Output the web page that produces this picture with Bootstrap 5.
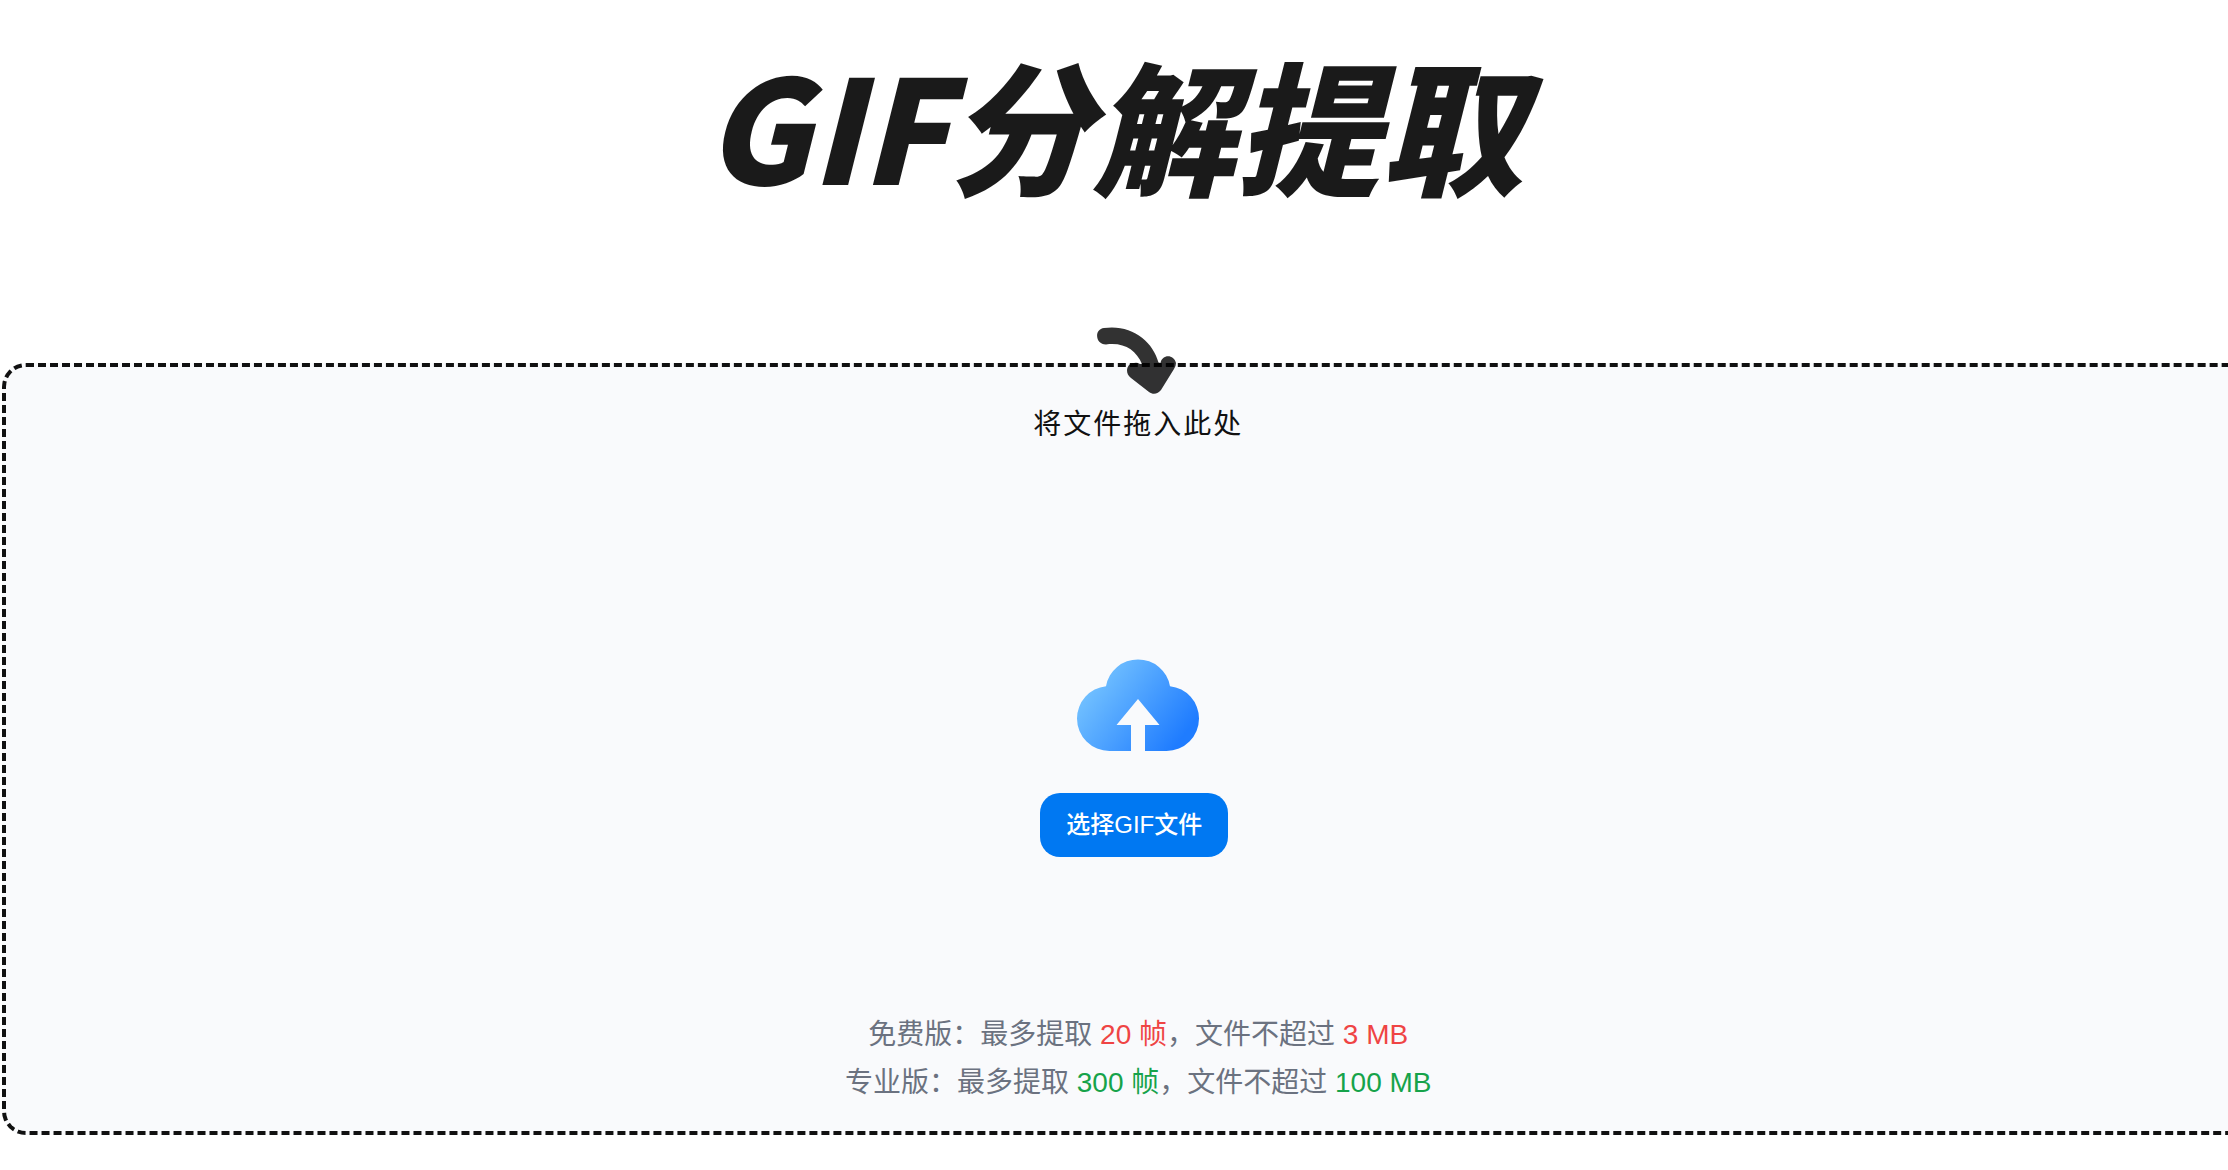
<!DOCTYPE html>
<html lang="zh-CN">
<head>
<meta charset="utf-8">
<meta name="viewport" content="width=device-width, initial-scale=1">
<title>GIF分解提取</title>
<link rel="stylesheet" href="https://cdn.jsdelivr.net/npm/bootstrap@5.3.0/dist/css/bootstrap.min.css">
<style>
body { font-family: "Liberation Sans", "Noto Sans CJK SC", sans-serif; background: #fff; color: #111; }
.page-title { font-family: "Noto Sans CJK SC", sans-serif; font-size: 144px; font-weight: 900; font-style: italic; line-height: 180px; color: #1a1a1a; padding: 32px 0 151px; }
.drop-zone { width: 102%; margin-left: 2px; border: 4px dashed #111; border-radius: 24px; background: #f9fafc; padding: 34px 24px 24px; }
.drop-arrow { width: 80px; height: 68px; top: -40px; left: 50%; margin-left: -41px; }
.drop-hint { font-size: 28px; line-height: 48px; letter-spacing: 2px; }
.cloud-icon { width: 122px; height: 92px; }
.upload-area { padding: 210px 0 154px; gap: 42px; }
.btn-pick { --bs-btn-color: #fff; --bs-btn-bg: #0078f2; --bs-btn-hover-color: #fff; --bs-btn-hover-bg: #006add; --bs-btn-active-bg: #005fc6; font-size: 24px; font-weight: 500; line-height: 32px; padding: 16px 26px; border: 0; border-radius: 20px; }
.limits { font-size: 28px; line-height: 48px; color: #6b7280; }
.limit-free { color: #ef4444; }
.limit-pro { color: #16a34a; }
</style>
</head>
<body class="overflow-x-hidden">
<header class="text-center">
  <h1 class="page-title text-nowrap m-0">GIF分解提取</h1>
</header>
<main class="drop-zone position-relative d-flex flex-column align-items-center">
  <svg class="drop-arrow position-absolute" viewBox="0 0 80 68" opacity=".8" aria-hidden="true">
    <path d="M7 1C34-3 56 14 61.500 35.500L63.500 36C65 27 77 27 79 36Q79 39 77 42L64 63C61 67 56 68 52 65L34 51C27 46 30 36 37 36Q40 35 43 37H45C39 23 27 15 9 17.500C-2 17.500-3 2 7 1Z"/>
  </svg>
  <p class="drop-hint m-0">将文件拖入此处</p>
  <div class="upload-area d-flex flex-column align-items-center">
    <svg class="cloud-icon" viewBox="0 0 122 92" aria-hidden="true">
      <defs>
        <linearGradient id="cloudFill" gradientUnits="userSpaceOnUse" x1="22" y1="18" x2="104" y2="80">
          <stop offset="0" stop-color="#70bfff"/>
          <stop offset="1" stop-color="#1f7cff"/>
        </linearGradient>
      </defs>
      <path fill="url(#cloudFill)" d="M29 27.200A32.500 32.500 0 0 1 93 27.200A32.500 32.500 0 0 1 122 59.500A32.500 32.500 0 0 1 89.500 92H68V66H82.500L61 40L39.500 66H54V92H32.500A32.500 32.500 0 0 1 0 59.500A32.500 32.500 0 0 1 29 27.200Z"/>
    </svg>
    <button type="button" class="btn btn-pick me-2">选择GIF文件</button>
  </div>
  <div class="limits text-center">
    <p class="m-0">免费版：最多提取 <span class="limit-free">20 帧</span>，文件不超过 <span class="limit-free">3 MB</span></p>
    <p class="m-0">专业版：最多提取 <span class="limit-pro">300 帧</span>，文件不超过 <span class="limit-pro">100 MB</span></p>
  </div>
</main>
<script src="https://cdn.jsdelivr.net/npm/bootstrap@5.3.0/dist/js/bootstrap.bundle.min.js"></script>
</body>
</html>
